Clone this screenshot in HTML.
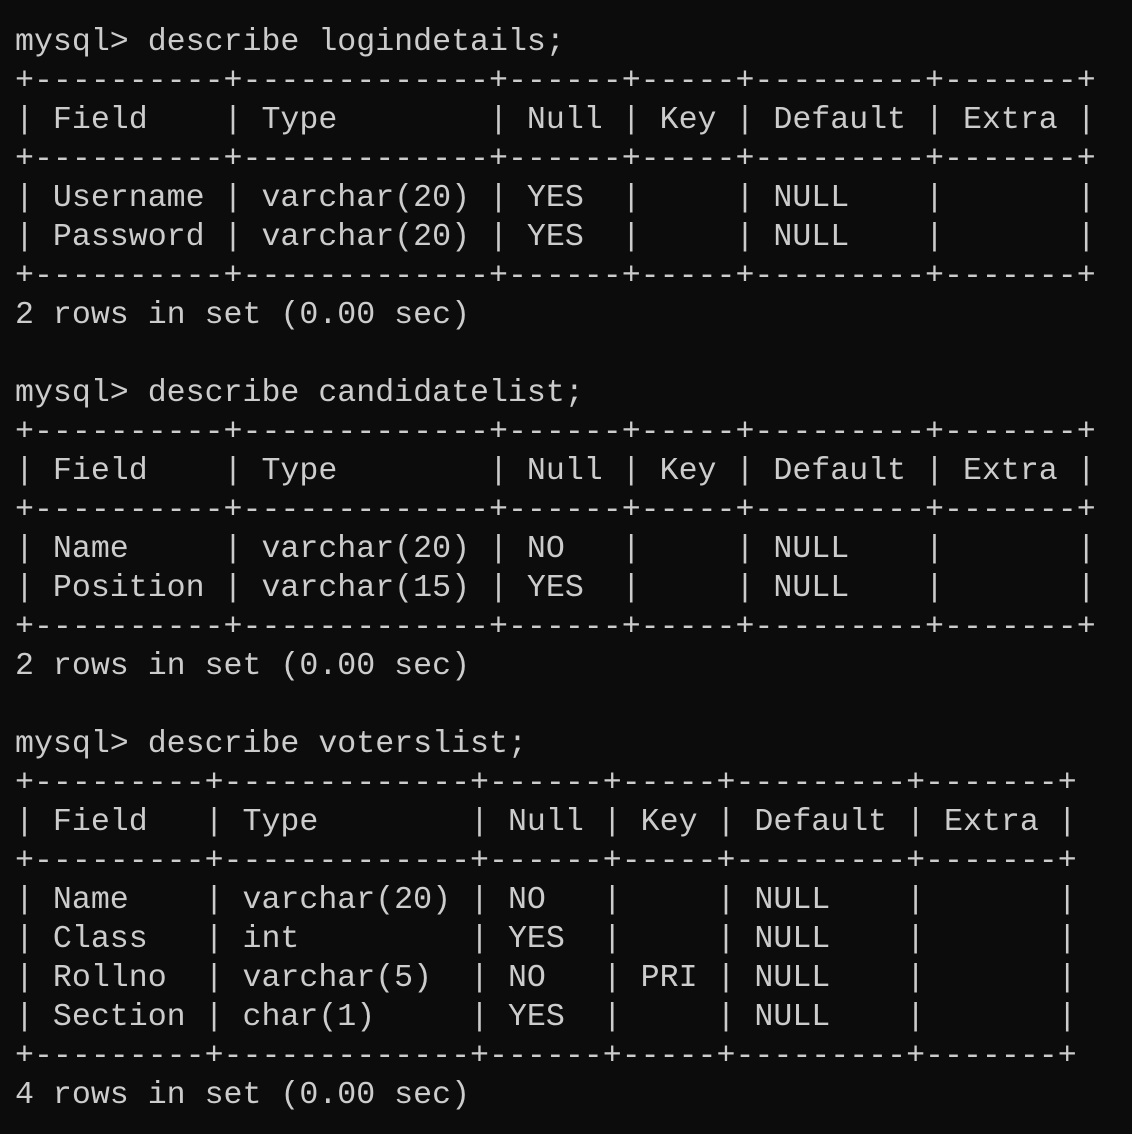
<!DOCTYPE html>
<html><head><meta charset="utf-8"><style>
html,body{margin:0;padding:0;background:#0c0c0c;width:1132px;height:1134px;overflow:hidden}
pre{margin:0;padding:23px 0 0 15px;font-family:"Liberation Mono",monospace;font-size:31.6px;line-height:39px;color:#cccccc;white-space:pre}
</style></head><body><pre>mysql&gt; describe logindetails;
+----------+-------------+------+-----+---------+-------+
| Field    | Type        | Null | Key | Default | Extra |
+----------+-------------+------+-----+---------+-------+
| Username | varchar(20) | YES  |     | NULL    |       |
| Password | varchar(20) | YES  |     | NULL    |       |
+----------+-------------+------+-----+---------+-------+
2 rows in set (0.00 sec)

mysql&gt; describe candidatelist;
+----------+-------------+------+-----+---------+-------+
| Field    | Type        | Null | Key | Default | Extra |
+----------+-------------+------+-----+---------+-------+
| Name     | varchar(20) | NO   |     | NULL    |       |
| Position | varchar(15) | YES  |     | NULL    |       |
+----------+-------------+------+-----+---------+-------+
2 rows in set (0.00 sec)

mysql&gt; describe voterslist;
+---------+-------------+------+-----+---------+-------+
| Field   | Type        | Null | Key | Default | Extra |
+---------+-------------+------+-----+---------+-------+
| Name    | varchar(20) | NO   |     | NULL    |       |
| Class   | int         | YES  |     | NULL    |       |
| Rollno  | varchar(5)  | NO   | PRI | NULL    |       |
| Section | char(1)     | YES  |     | NULL    |       |
+---------+-------------+------+-----+---------+-------+
4 rows in set (0.00 sec)</pre></body></html>
